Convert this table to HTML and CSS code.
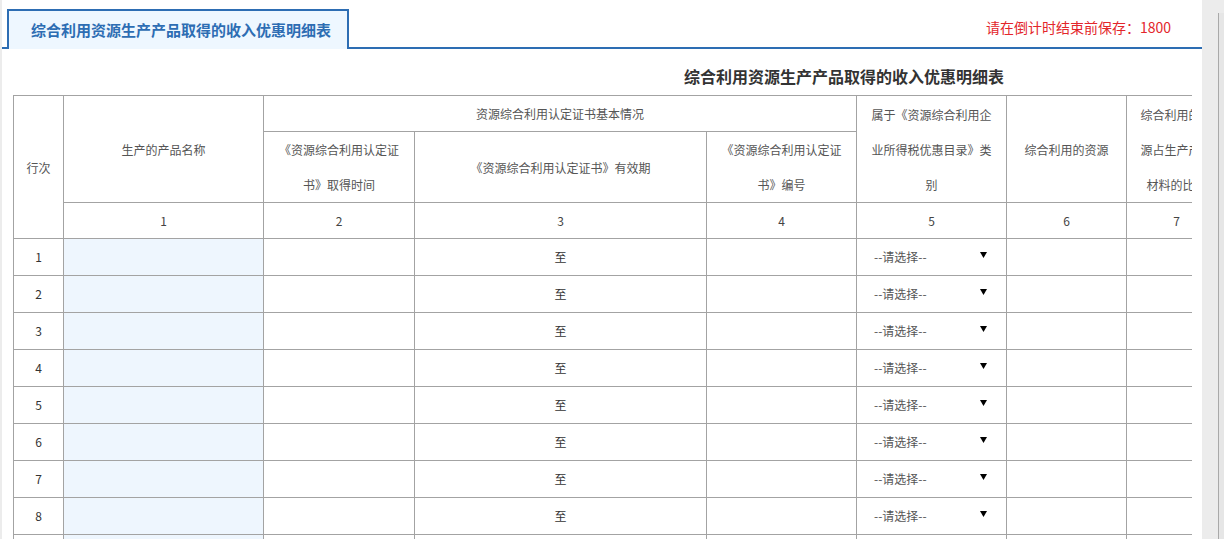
FILE: index.html
```html
<!DOCTYPE html>
<html lang="zh-CN">
<head>
<meta charset="utf-8">
<title>综合利用资源生产产品取得的收入优惠明细表</title>
<link rel="stylesheet" href="styles.css">
</head>
<body>
<div class="page">
  <div class="main">
    <div class="topbar">
      <div class="tab">综合利用资源生产产品取得的收入优惠明细表</div>
      <div class="countdown">请在倒计时结束前保存：1800</div>
    </div>
    <div class="viewport">
      <div class="sheet">
        <h1 class="title">综合利用资源生产产品取得的收入优惠明细表</h1>
        <table class="grid">
          <colgroup>
            <col class="c0"><col class="c1"><col class="c2"><col class="c3"><col class="c4"><col class="c5"><col class="c6"><col class="c7"><col class="c8"><col class="c9"><col class="c10"><col class="c11">
          </colgroup>
          <thead>
            <tr>
              <th rowspan="3">行次</th>
              <th rowspan="2">生产的产品名称</th>
              <th colspan="3">资源综合利用认定证书基本情况</th>
              <th rowspan="2">属于《资源综合利用企业所得税优惠目录》类别</th>
              <th rowspan="2">综合利用的资源</th>
              <th rowspan="2">综合利用的资源占生产产品材料的比例</th>
              <th rowspan="2">《目录》规定的技术标准</th>
              <th rowspan="2">符合条件的产品取得的收入总额</th>
              <th rowspan="2">减计收入</th>
              <th rowspan="2">备注</th>
            </tr>
            <tr>
              <th>《资源综合利用认定证书》取得时间</th>
              <th>《资源综合利用认定证书》有效期</th>
              <th>《资源综合利用认定证书》编号</th>
            </tr>
            <tr class="nums">
              <th>1</th><th>2</th><th>3</th><th>4</th><th>5</th><th>6</th><th>7</th><th>8</th><th>9</th><th>10</th><th>11</th>
            </tr>
          </thead>
          <tbody>
            <tr><td class="no">1</td><td class="input"></td><td></td><td class="to">至</td><td></td><td><div class="select"><span>--请选择--</span><svg width="7" height="6" viewBox="0 0 7 6"><path d="M0 0H7L3.5 6Z" fill="#000"/></svg></div></td><td></td><td></td><td></td><td></td><td></td><td></td></tr>
            <tr><td class="no">2</td><td class="input"></td><td></td><td class="to">至</td><td></td><td><div class="select"><span>--请选择--</span><svg width="7" height="6" viewBox="0 0 7 6"><path d="M0 0H7L3.5 6Z" fill="#000"/></svg></div></td><td></td><td></td><td></td><td></td><td></td><td></td></tr>
            <tr><td class="no">3</td><td class="input"></td><td></td><td class="to">至</td><td></td><td><div class="select"><span>--请选择--</span><svg width="7" height="6" viewBox="0 0 7 6"><path d="M0 0H7L3.5 6Z" fill="#000"/></svg></div></td><td></td><td></td><td></td><td></td><td></td><td></td></tr>
            <tr><td class="no">4</td><td class="input"></td><td></td><td class="to">至</td><td></td><td><div class="select"><span>--请选择--</span><svg width="7" height="6" viewBox="0 0 7 6"><path d="M0 0H7L3.5 6Z" fill="#000"/></svg></div></td><td></td><td></td><td></td><td></td><td></td><td></td></tr>
            <tr><td class="no">5</td><td class="input"></td><td></td><td class="to">至</td><td></td><td><div class="select"><span>--请选择--</span><svg width="7" height="6" viewBox="0 0 7 6"><path d="M0 0H7L3.5 6Z" fill="#000"/></svg></div></td><td></td><td></td><td></td><td></td><td></td><td></td></tr>
            <tr><td class="no">6</td><td class="input"></td><td></td><td class="to">至</td><td></td><td><div class="select"><span>--请选择--</span><svg width="7" height="6" viewBox="0 0 7 6"><path d="M0 0H7L3.5 6Z" fill="#000"/></svg></div></td><td></td><td></td><td></td><td></td><td></td><td></td></tr>
            <tr><td class="no">7</td><td class="input"></td><td></td><td class="to">至</td><td></td><td><div class="select"><span>--请选择--</span><svg width="7" height="6" viewBox="0 0 7 6"><path d="M0 0H7L3.5 6Z" fill="#000"/></svg></div></td><td></td><td></td><td></td><td></td><td></td><td></td></tr>
            <tr><td class="no">8</td><td class="input"></td><td></td><td class="to">至</td><td></td><td><div class="select"><span>--请选择--</span><svg width="7" height="6" viewBox="0 0 7 6"><path d="M0 0H7L3.5 6Z" fill="#000"/></svg></div></td><td></td><td></td><td></td><td></td><td></td><td></td></tr>
            <tr><td class="no">9</td><td class="input"></td><td></td><td class="to">至</td><td></td><td><div class="select"><span>--请选择--</span><svg width="7" height="6" viewBox="0 0 7 6"><path d="M0 0H7L3.5 6Z" fill="#000"/></svg></div></td><td></td><td></td><td></td><td></td><td></td><td></td></tr>
            <tr><td class="no">10</td><td class="input"></td><td></td><td class="to">至</td><td></td><td><div class="select"><span>--请选择--</span><svg width="7" height="6" viewBox="0 0 7 6"><path d="M0 0H7L3.5 6Z" fill="#000"/></svg></div></td><td></td><td></td><td></td><td></td><td></td><td></td></tr>
          </tbody>
        </table>
      </div>
    </div>
  </div>
  <div class="scrollbar"><div class="thumb"></div></div>
</div>
</body>
</html>
```
FILE: styles.css
```css
html, body {
  margin: 0;
  padding: 0;
  height: 100%;
  overflow: hidden;
}
body {
  background: #ececec;
  font-family: "Noto Sans CJK SC", "Microsoft YaHei", sans-serif;
  color: #333;
}
.page {
  display: flex;
  height: 539px;
}
.main {
  width: 1200px;
  margin-left: 2px;
  background: #fff;
  overflow: hidden;
  flex: none;
}
.topbar {
  display: flex;
  justify-content: space-between;
  align-items: flex-start;
  padding-top: 9px;
  height: 38px;
  border-bottom: 2px solid #2d6db3;
}
.tab {
  box-sizing: border-box;
  width: 342px;
  height: 40px;
  margin-left: 5px;
  margin-bottom: -2px;
  padding-left: 22px;
  border: 2px solid #2d6db3;
  border-bottom: 0;
  background: #eef7ff;
  color: #2d6db3;
  font-size: 15px;
  font-weight: bold;
  line-height: 38px;
  white-space: nowrap;
}
.countdown {
  margin-top: 8px;
  margin-right: 31px;
  color: #e3262b;
  font-size: 14px;
  line-height: 20px;
  white-space: nowrap;
}
.viewport {
  width: 1179px;
  margin-left: 11px;
  overflow: hidden;
}
.sheet {
  width: 1662px;
}
.title {
  margin: 0 0 7px;
  padding-top: 15px;
  font-size: 16px;
  font-weight: bold;
  line-height: 24px;
  text-align: center;
  color: #333;
}
.grid {
  width: 1661px;
  table-layout: fixed;
  border-collapse: collapse;
  font-size: 12px;
}
.c0 { width: 50px; }
.c1 { width: 200px; }
.c2 { width: 151px; }
.c3 { width: 292px; }
.c4 { width: 150px; }
.c5 { width: 150px; }
.c6 { width: 120px; }
.c7 { width: 100px; }
.c8 { width: 112px; }
.c9 { width: 112px; }
.c10 { width: 112px; }
.c11 { width: 112px; }
.grid th,
.grid td {
  border: 1px solid #a3a3a3;
  padding: 0 10px;
  text-align: center;
  vertical-align: middle;
}
.grid th {
  font-weight: normal;
  color: #555;
  line-height: 35px;
}
.grid td {
  line-height: 36px;
  height: 36px;
  color: #333;
}
.grid .nums th {
  color: #444;
}
.grid td.input {
  background: #eef6fe;
}
.select {
  display: flex;
  justify-content: space-between;
  align-items: center;
  padding: 0 9px 0 7px;
  color: #555;
  text-align: left;
}
.select svg {
  flex: none;
  margin-top: -4px;
}
.scrollbar {
  flex: 1;
  padding: 13px 0 0 16px;
  background: #ececec;
  display: flex;
}
.thumb {
  flex: 1;
  border-left: 1px solid #a9a9a9;
  background: #e6e6e6;
}
```
